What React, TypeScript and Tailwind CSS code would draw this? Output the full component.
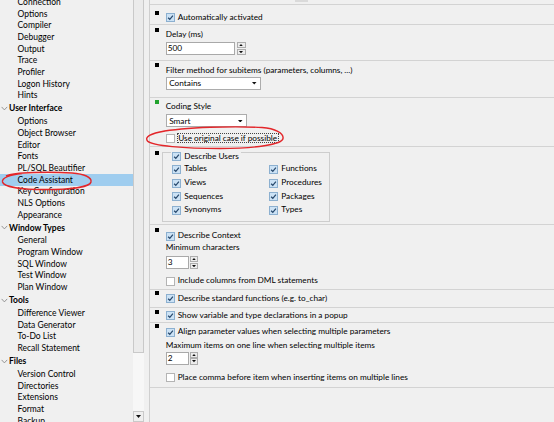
import React from "react";

type Item = { t: string; h?: boolean; sel?: boolean };

const tree: Item[] = [
  { t: "Connection" },
  { t: "Options" },
  { t: "Compiler" },
  { t: "Debugger" },
  { t: "Output" },
  { t: "Trace" },
  { t: "Profiler" },
  { t: "Logon History" },
  { t: "Hints" },
  { t: "User Interface", h: true },
  { t: "Options" },
  { t: "Object Browser" },
  { t: "Editor" },
  { t: "Fonts" },
  { t: "PL/SQL Beautifier" },
  { t: "Code Assistant", sel: true },
  { t: "Key Configuration" },
  { t: "NLS Options" },
  { t: "Appearance" },
  { t: "Window Types", h: true },
  { t: "General" },
  { t: "Program Window" },
  { t: "SQL Window" },
  { t: "Test Window" },
  { t: "Plan Window" },
  { t: "Tools", h: true },
  { t: "Difference Viewer" },
  { t: "Data Generator" },
  { t: "To-Do List" },
  { t: "Recall Statement" },
  { t: "Files", h: true },
  { t: "Version Control" },
  { t: "Directories" },
  { t: "Extensions" },
  { t: "Format" },
  { t: "Backup" },
];

function TriDown({ w = 4, h = 2.5 }: { w?: number; h?: number }) {
  return (
    <svg width={w} height={h} viewBox={`0 0 ${w} ${h}`} className="shrink-0">
      <polygon points={`0,0 ${w},0 ${w / 2},${h}`} fill="#111" />
    </svg>
  );
}

function TriUp({ w = 4, h = 2.5 }: { w?: number; h?: number }) {
  return (
    <svg width={w} height={h} viewBox={`0 0 ${w} ${h}`} className="shrink-0">
      <polygon points={`0,${h} ${w},${h} ${w / 2},0`} fill="#111" />
    </svg>
  );
}

function Box({ on }: { on?: boolean }) {
  return on ? (
    <span className="flex items-center justify-center w-[9px] h-[9px] shrink-0 border border-[#8cb0d0] bg-[#cce2f5]">
      <svg width="7" height="7" viewBox="0 0 7 7">
        <path d="M1.1 3.7 L2.8 5.3 L5.9 1.6" fill="none" stroke="#27486c" strokeWidth="1.2" />
      </svg>
    </span>
  ) : (
    <span className="block w-[9px] h-[9px] shrink-0 border border-[#b4b4b4] bg-white" />
  );
}

function Check({ label, on }: { label: string; on?: boolean }) {
  return (
    <div className="flex items-center h-[9px]">
      <Box on={on} />
      <span className="ml-[3px] mb-[1px] leading-[9px] whitespace-nowrap">{label}</span>
    </div>
  );
}

function Label({ t, cls }: { t: string; cls: string }) {
  return <div className={`${cls} h-[10px] leading-[10px] whitespace-nowrap`}>{t}</div>;
}

function Spin({ v, wide, cls }: { v: string; wide?: boolean; cls: string }) {
  return (
    <div className={`${cls} flex`}>
      <div
        className={`${wide ? "w-[69px]" : "w-[23px]"} h-[13px] border border-[#a9a9a9] bg-white flex items-center pl-[1px] leading-none`}
      >
        {v}
      </div>
      <div className={`${wide ? "ml-[2.3px] w-[9px]" : "ml-[1.7px] w-[7.5px]"} h-[13px] flex flex-col justify-between`}>
        <div className="h-[6.3px] border border-[#adadad] bg-[#ececec] flex items-center justify-center">
          <TriUp w={4} h={2.3} />
        </div>
        <div className="h-[6.3px] border border-[#adadad] bg-[#ececec] flex items-center justify-center">
          <TriDown w={4} h={2.3} />
        </div>
      </div>
    </div>
  );
}

function Combo({ t, wide, cls }: { t: string; wide?: boolean; cls: string }) {
  return (
    <div
      className={`${cls} ${wide ? "w-[95px]" : "w-[81px]"} h-[13px] border border-[#acacac] bg-white flex items-center pl-[2.5px] pr-[3px] leading-none`}
    >
      <span className="flex-1 mb-[0.5px]">{t}</span>
      <TriDown w={4.5} h={2.6} />
    </div>
  );
}

function Row({
  h,
  bm,
  green,
  cm,
  children,
}: {
  h: string;
  bm: string;
  green?: boolean;
  cm?: string;
  children: React.ReactNode;
}) {
  return (
    <div className={`${h} shrink-0 flex border-b border-[#d3d3d3]`}>
      <div className={`ml-[5px] ${bm} w-[4px] h-[4px] shrink-0 ${green ? "bg-[#22a32e]" : "bg-black"}`} />
      <div className={`${cm ?? "ml-[6.7px]"} flex flex-col items-start`}>{children}</div>
    </div>
  );
}

export default function App() {
  return (
    <div className="relative w-[554px] h-[422px] overflow-hidden bg-[#f0f0f0] text-black flex font-['Lato',sans-serif] text-[8.25px]">
      {/* Tree */}
      <div className="w-[133px] shrink-0 overflow-hidden leading-none">
        <div className="mt-[-3.5px] flex flex-col">
          {tree.map((it, i) =>
            it.h ? (
              <div key={i} className="h-[14.3px] shrink-0 flex items-center">
                <svg width="7" height="5" viewBox="0 0 7 5" className="ml-[0.5px] shrink-0">
                  <polyline points="0.6,0.9 3.4,3.9 6.2,0.9" fill="none" stroke="#8a8a8a" strokeWidth="0.9" />
                </svg>
                <span className="ml-[1.5px] font-bold whitespace-nowrap text-[8.5px]">{it.t}</span>
              </div>
            ) : (
              <div
                key={i}
                className={`h-[11.67px] shrink-0 flex items-center pl-[17.5px] whitespace-nowrap text-[8.5px] ${it.sel ? "bg-[#9fcdef]" : ""}`}
              >
                {it.t}
              </div>
            )
          )}
        </div>
      </div>

      {/* Scrollbar */}
      <div className="w-[11px] shrink-0 flex flex-col">
        <div className="h-[353px] border-x border-b border-[#c9c9c9] bg-[#ebebeb]" />
        <div className="flex-1 bg-[#f7f7f7]" />
        <div className="h-[11px] border border-[#c9c9c9] bg-[#efefef] flex items-center justify-center">
          <TriDown w={5} h={3} />
        </div>
      </div>

      {/* Options panel */}
      <div className="ml-[5px] flex-1 border-l border-[#cfcfcf] flex flex-col leading-none">
        <div className="h-[5px] shrink-0 border-b border-[#d3d3d3] flex">
          <div className="ml-[145px] w-[13px] h-[2px] bg-[#dadada]" />
        </div>

        <Row h="h-[20px]" bm="mt-[6px]">
          <div className="pt-[8px]">
            <Check on label="Automatically activated" />
          </div>
        </Row>

        <Row h="h-[36px]" bm="mt-[3px]">
          <Label t="Delay (ms)" cls="mt-[4px]" />
          <Spin v="500" wide cls="mt-[3px]" />
        </Row>

        <Row h="h-[37px]" bm="mt-[2.3px]">
          <Label t="Filter method for subitems (parameters, columns, ...)" cls="mt-[4px]" />
          <Combo t="Contains" wide cls="mt-[2px]" />
        </Row>

        <Row h="h-[49px]" bm="mt-[2px]" green>
          <Label t="Coding Style" cls="mt-[2.6px]" />
          <Combo t="Smart" cls="mt-[3.9px]" />
          <div className="mt-[6.5px] flex items-center h-[9px]">
            <Box />
            <span className="ml-[2px] h-[10px] leading-[8px] px-[0.5px] border border-dotted border-[#444] whitespace-nowrap">
              Use original case if possible
            </span>
          </div>
        </Row>

        <Row h="h-[78px]" bm="mt-[4px]" cm="ml-[3px]">
          <div className="mt-[5px] w-[168px] h-[70px] border border-[#cdcdcd] flex flex-col">
            <div className="-mt-[1px] ml-[8.3px] pl-[1px] pr-[2px] self-start bg-[#f0f0f0]">
              <Check on label="Describe Users" />
            </div>
            <div className="mt-[1.7px] ml-[9.3px] grid grid-cols-[97px_auto]">
              {["Tables", "Functions", "Views", "Procedures", "Sequences", "Packages", "Synonyms", "Types"].map((t) => (
                <div key={t} className="h-[13.6px] flex items-center">
                  <Check on label={t} />
                </div>
              ))}
            </div>
          </div>
        </Row>

        <Row h="h-[65px]" bm="mt-[3.3px]">
          <div className="mt-[6.7px]">
            <Check on label="Describe Context" />
          </div>
          <Label t="Minimum characters" cls="mt-[1.5px]" />
          <Spin v="3" cls="mt-[3.8px]" />
          <div className="mt-[7.7px]">
            <Check label="Include columns from DML statements" />
          </div>
        </Row>

        <Row h="h-[18px]" bm="mt-[1px]">
          <div className="mt-[4px]">
            <Check on label="Describe standard functions (e.g. to_char)" />
          </div>
        </Row>

        <Row h="h-[15px]" bm="mt-[2px]">
          <div className="mt-[3px]">
            <Check on label="Show variable and type declarations in a popup" />
          </div>
        </Row>

        <Row h="h-[65px]" bm="mt-[1.3px]">
          <div className="mt-[4.7px]">
            <Check on label="Align parameter values when selecting multiple parameters" />
          </div>
          <Label t="Maximum items on one line when selecting multiple items" cls="mt-[3.2px]" />
          <Spin v="2" cls="mt-[1.8px]" />
          <div className="mt-[8.6px]">
            <Check label="Place comma before item when inserting items on multiple lines" />
          </div>
        </Row>
      </div>

      {/* Red hand-drawn annotations */}
      <svg
        className="absolute inset-0 pointer-events-none"
        width="554"
        height="422"
        viewBox="0 0 554 422"
      >
        <path
          d="M6 176 C14 172, 50 171.5, 72 173 C84 174, 92 177, 91 182 C90 187, 70 189.5, 45 189.5 C22 189.5, 4 187, 2.5 182 C1.5 178, 10 174.5, 22 173.5"
          fill="none"
          stroke="#e3262a"
          strokeWidth="1.4"
        />
        <path
          d="M160 132 C185 127, 235 126, 262 127.5 C275 128.5, 284 133, 283 138.5 C282 144.5, 255 148.5, 220 148.5 C185 148.5, 152 146, 147.5 141 C144.5 137, 150 133.5, 165 131"
          fill="none"
          stroke="#e3262a"
          strokeWidth="1.4"
        />
      </svg>
    </div>
  );
}
